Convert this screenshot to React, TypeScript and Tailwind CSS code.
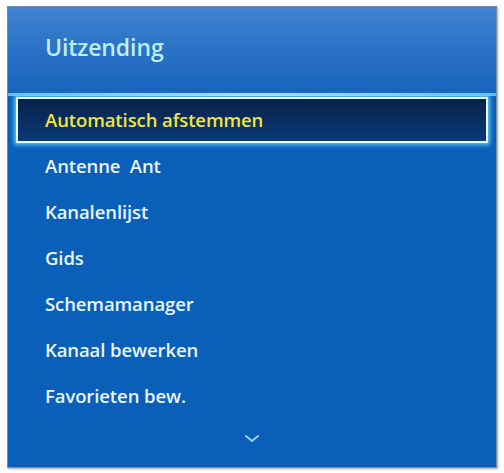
import React from 'react';

const items = [
  'Antenne  Ant',
  'Kanalenlijst',
  'Gids',
  'Schemamanager',
  'Kanaal bewerken',
  'Favorieten bew.',
];

const App = () => {
  return (
    <div className="w-[504px] h-[473px] bg-white pt-[6px] pl-[7px]" style={{ fontFamily: '"Open Sans", "Noto Sans", sans-serif' }}>
      <div className="w-[490px] h-[462px] border border-[#7b8da3] bg-[#0a60b9] flex flex-col shadow-[1px_1px_2px_rgba(0,0,0,0.35)]">
        <div className="h-[86px] bg-gradient-to-b from-[#3f84d0] via-[#2a72c6] to-[#1763bb] pl-[37px] pt-[29px]">
          <h1 className="text-[23px] font-semibold text-[#bdeef7] leading-none tracking-[-0.1px]">Uitzending</h1>
        </div>
        <div className="h-[3px] bg-gradient-to-r from-[#6fd3f6] via-[#c8f4ff] to-[#6fd3f6] opacity-80" />
        <div className="px-[8px] pt-[1px]">
          <div className="h-[46px] border-2 border-[#e8fbff] bg-gradient-to-b from-[#07214a] to-[#0b3a78] shadow-[0_0_4px_2px_rgba(120,220,255,0.8)] flex items-center pl-[27px]">
            <span className="text-[18.5px] font-semibold text-[#f4e534] tracking-[-0.1px]">Automatisch afstemmen</span>
          </div>
        </div>
        <ul className="flex flex-col pl-[37px]">
          {items.map((item) => (
            <li key={item} className="h-[46px] flex items-center text-[18.5px] font-semibold text-[#e9f6ff] tracking-[-0.1px] whitespace-pre">
              {item}
            </li>
          ))}
        </ul>
        <div className="flex justify-center pt-[16px]">
          <svg width="14" height="8" viewBox="0 0 14 8" fill="none">
            <path d="M1 1l6 5 6-5" stroke="#9fd4f5" strokeWidth="1.8" strokeLinecap="round" strokeLinejoin="round" />
          </svg>
        </div>
      </div>
    </div>
  );
};

export default App;
